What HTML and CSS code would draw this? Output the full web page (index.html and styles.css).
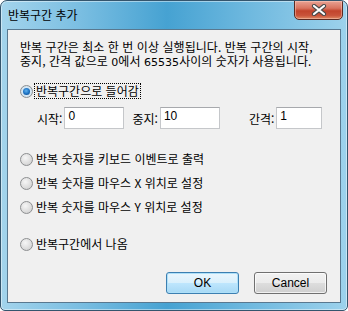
FILE: index.html
```html
<!doctype html>
<html lang="ko">

<head>
    <meta charset="UTF-8">
    <title>반복구간 추가</title>
    <link rel="stylesheet" href="styles.css">
</head>

<body>
    <div class="window">
        <div class="titlebar">
            <span class="title">반복구간 추가</span>
            <button class="close" type="button">
                <svg width="16" height="12" viewBox="0 0 16 12">
                    <path d="M3 2 L13 10 M13 2 L3 10" stroke="#4a4a4a" stroke-width="4.2" stroke-linecap="round" fill="none"/>
                    <path d="M3 2 L13 10 M13 2 L3 10" stroke="#fff" stroke-width="2.2" stroke-linecap="round" fill="none"/>
                </svg>
            </button>
        </div>
        <div class="client">
            <p class="desc">반복 구간은 최소 한 번 이상 실행됩니다. 반복 구간의 시작,<br>중지, 간격 값으로 <span class="num">0</span>에서 <span class="num">65535</span>사이의 숫자가 사용됩니다.</p>

            <label class="radio enter"><span class="mark on"></span><span class="text focus">반복구간으로 들어감</span></label>

            <div class="fields">
                <span class="lbl">시작:</span><input class="box w60" type="text" value="0">
                <span class="lbl gap8">중지:</span><input class="box w60" type="text" value="10">
                <span class="lbl gap29">간격:</span><input class="box w46" type="text" value="1">
            </div>

            <div class="group">
                <label class="radio"><span class="mark"></span><span class="text">반복 숫자를 키보드 이벤트로 출력</span></label>
                <label class="radio"><span class="mark"></span><span class="text">반복 숫자를 마우스 X 위치로 설정</span></label>
                <label class="radio"><span class="mark"></span><span class="text">반복 숫자를 마우스 Y 위치로 설정</span></label>
            </div>

            <label class="radio exit"><span class="mark"></span><span class="text">반복구간에서 나옴</span></label>

            <div class="buttons">
                <button class="btn default" type="button">OK</button>
                <button class="btn" type="button">Cancel</button>
            </div>
        </div>
    </div>
</body>

</html>
```

FILE: styles.css
```css
* {
    margin: 0;
    padding: 0;
    box-sizing: border-box;
}

body {
    width: 348px;
    height: 311px;
    background: #fff;
    font-family: "Noto Sans CJK KR", "Liberation Sans", sans-serif;
    font-size: 12px;
    color: #000;
}

/* 창 테두리 */
.window {
    width: 348px;
    height: 311px;
    display: flex;
    flex-direction: column;
    padding: 0 6px 7px;
    border: 1px solid #34556d;
    border-radius: 7px 7px 5px 5px;
    background: linear-gradient(to right, #a3d4ec 0%, #7cbfe2 22%, #46a2d2 48%, #6fb9df 72%, #9dd2ec 100%);
    box-shadow: inset 0 0 0 1px rgba(255, 255, 255, .45);
    overflow: hidden;
}

.titlebar {
    height: 28px;
    display: flex;
    justify-content: space-between;
    align-items: flex-start;
}

.title {
    padding: 6px 0 0 1px;
    line-height: 16px;
    color: #000;
}

.close {
    width: 49px;
    height: 20px;
    margin: -1px -2px 0 0;
    display: flex;
    align-items: center;
    justify-content: center;
    border: 1px solid #5a2a22;
    border-radius: 0 0 5px 5px;
    background: linear-gradient(#e9a394 0%, #d9735f 40%, #c2442c 55%, #c9533a 80%, #de8a63 100%);
    box-shadow: inset 0 0 0 1px rgba(255, 210, 200, .45);
}

.client {
    flex: 1;
    display: flex;
    flex-direction: column;
    padding: 10px 13px 0 12px;
    background: #f0f0f0;
    border: 1px solid #59788f;
}

.desc {
    line-height: 14px;
    letter-spacing: .05px;
}

.desc .num {
    font-family: "DejaVu Sans", sans-serif;
    font-size: 11px;
}

/* 라디오 버튼 */
.radio {
    height: 16px;
    display: flex;
    align-items: center;
}

.mark {
    width: 13px;
    height: 13px;
    margin-right: 1px;
    border: 1px solid #8d8f91;
    border-radius: 50%;
    background: radial-gradient(circle at 40% 35%, #f6f6f6 0%, #dcdcdc 60%, #c9c9c9 100%);
    display: flex;
    align-items: center;
    justify-content: center;
}

.mark.on {
    background: radial-gradient(circle, #e8f3fb 0%, #c6dcec 100%);
}

.mark.on::after {
    content: "";
    width: 7px;
    height: 7px;
    border-radius: 50%;
    background: radial-gradient(circle at 45% 40%, #5fb2f0 0%, #1a6fc0 55%, #0b3f7a 100%);
}

.text {
    padding: 0 1px;
    border: 1px dotted transparent;
    line-height: 14px;
}

.text.focus {
    border-color: #000;
}

.enter {
    margin-top: 13px;
}

/* 입력 칸 */
.fields {
    margin-top: 8px;
    padding-left: 17px;
    display: flex;
    align-items: center;
}

.lbl {
    margin-right: 2px;
}

.gap8 {
    margin-left: 8px;
}

.gap29 {
    margin-left: 29px;
}

.box {
    height: 22px;
    padding: 0 0 4px 3px;
    border: 1px solid #c5c7ca;
    border-top-color: #a7a9ad;
    background: #fff;
    font-family: "Liberation Sans", sans-serif;
    font-size: 12px;
    color: #000;
    outline: none;
}

.w60 {
    width: 60px;
}

.w46 {
    width: 46px;
}

.group {
    margin-top: 22px;
    display: flex;
    flex-direction: column;
    gap: 8px;
}

.exit {
    margin-top: 21px;
}

/* 하단 버튼 */
.buttons {
    margin-top: 20px;
    display: flex;
    justify-content: flex-end;
    gap: 15px;
}

.btn {
    width: 73px;
    height: 22px;
    border: 1px solid #707070;
    border-radius: 3px;
    background: linear-gradient(#f2f2f2 0%, #ebebeb 50%, #dddddd 51%, #cfcfcf 100%);
    box-shadow: inset 0 0 0 1px rgba(255, 255, 255, .7);
    font-family: "Liberation Sans", sans-serif;
    font-size: 12px;
    color: #000;
}

.btn.default {
    border-color: #3c7fb1;
    background: linear-gradient(#eaf6fd 0%, #d9f0fc 50%, #bee6fd 51%, #a7d9f5 100%);
    box-shadow: inset 0 0 0 1px #aee0f9;
}
```
